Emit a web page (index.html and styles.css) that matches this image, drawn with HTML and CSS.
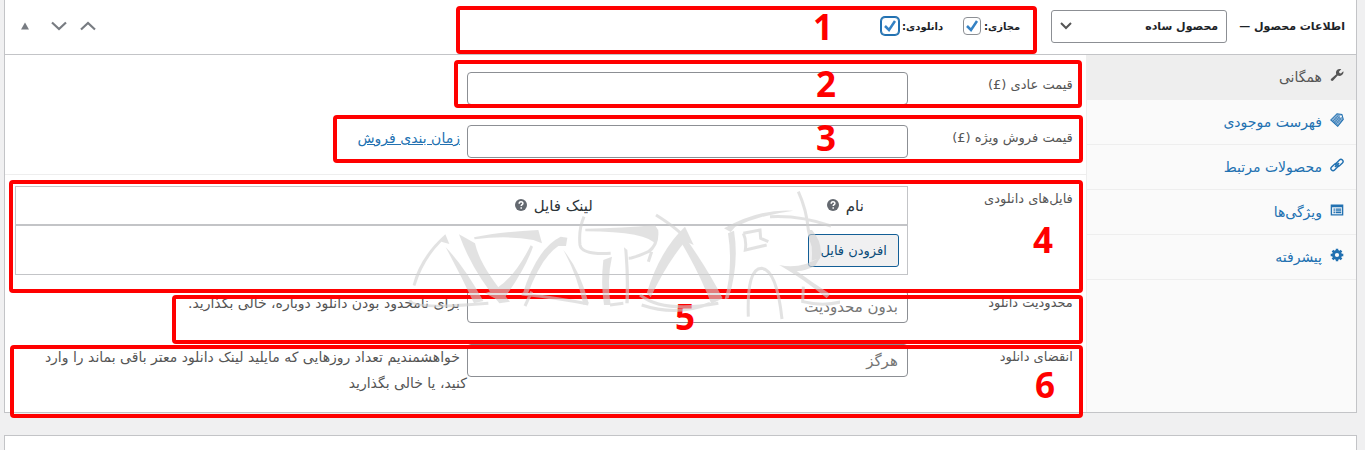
FILE: index.html
```html
<!DOCTYPE html>
<html lang="fa" dir="rtl">
<head>
<meta charset="utf-8">
<title>اطلاعات محصول</title>
<link rel="stylesheet" href="styles.css">
</head>
<body>
<main class="page">
  <section class="postbox">
    <header class="postbox-header">
      <h2 class="title">اطلاعات محصول —</h2>
      <select class="type-select" aria-label="نوع محصول"><option>محصول ساده</option></select>
      <div class="type-options">
        <label class="check">مجازی: <input type="checkbox" checked></label>
        <label class="check check-focus">دانلودی: <input type="checkbox" checked></label>
      </div>
      <div class="handles">
        <button type="button" aria-label="انتقال به بالا"><svg width="16" height="10" viewBox="0 0 16 10"><path d="M1 8.500 8 2l7 6.500" fill="none" stroke="#787c82" stroke-width="2.200"/></svg></button>
        <button type="button" aria-label="انتقال به پایین"><svg width="16" height="10" viewBox="0 0 16 10"><path d="M1 1.500 8 8l7-6.500" fill="none" stroke="#787c82" stroke-width="2.200"/></svg></button>
        <button type="button" class="toggle" aria-label="بستن"><svg width="10" height="10" viewBox="0 0 10 10"><path d="M5 1.500 9 8.500H1z" fill="#787c82"/></svg></button>
      </div>
    </header>
    <div class="panel-wrap">
      <nav class="tabs">
        <a href="#general" class="tab active"><svg viewBox="0 0 20 20"><path d="M17 10c-1.800 1.500-4 1.700-6 .8L4.500 18c-.8.8-2 .8-2.800 0s-.8-2 0-2.800L9 9c-.9-2-.6-4.500 1-6.100 1.700-1.700 4.200-2 6.100-1.100L12.900 5l.5 2.200 2.200.5L19 4.500c.8 2-.2 4-2 5.500z" fill="#555"/></svg>همگانی</a>
        <a href="#inventory" class="tab"><svg viewBox="0 0 20 20"><path d="M1 10 10 1l7 1 2 7-8 10z" fill="#8fb4d6" stroke="#2271b1" stroke-width="1.500"/><path d="M4 10l7 7M6 8l7 7M8 6l7 7M10 4l7 7M4 12 12 3M6 14l9-10M8 16 17 6" stroke="#2271b1" stroke-width=".8"/><circle cx="15.500" cy="5" r="1.500" fill="#fafafa"/></svg>فهرست موجودی</a>
        <a href="#linked" class="tab"><svg viewBox="0 0 20 20"><g fill="none" stroke="#2271b1" stroke-width="2"><rect x="7.500" y="4" width="12" height="6" rx="3" transform="rotate(-45 13.500 7)"/><rect x=".5" y="10" width="12" height="6" rx="3" transform="rotate(-45 6.500 13)"/><path d="M7 13l6-6"/></g></svg>محصولات مرتبط</a>
        <a href="#attributes" class="tab"><svg viewBox="0 0 20 20"><path fill-rule="evenodd" d="M1 2h18v16H1zM3 6v10h14V6z" fill="#2271b1"/><path d="M5 8h2v1.500H5zM5 10.500h2V12H5zM5 13h2v1.500H5zM8 8h8v1.500H8zM8 10.500h8V12H8zM8 13h8v1.500H8z" fill="#2271b1"/></svg>ویژگی‌ها</a>
        <a href="#advanced" class="tab"><svg viewBox="0 0 20 20"><circle cx="10" cy="10" r="5" fill="none" stroke="#2271b1" stroke-width="4"/><path d="M10 1v4M10 15v4M1 10h4M15 10h4M3.600 3.600l3 3M13.400 13.400l3 3M3.600 16.400l3-3M13.400 6.600l3-3" stroke="#2271b1" stroke-width="3.500"/></svg>پیشرفته</a>
      </nav>
      <div class="options">
        <div class="group prices">
          <div class="field"><label for="price">قیمت عادی (£)</label><input id="price" type="text"></div>
          <div class="field"><label for="sale">قیمت فروش ویژه (£)</label><input id="sale" type="text"><p class="hint"><a href="#schedule">زمان بندی فروش</a></p></div>
        </div>
        <div class="group downloads">
          <div class="field files">
            <span class="label">فایل‌های دانلودی</span>
            <table class="files-table">
              <colgroup><col class="c-sort"><col class="c-name"><col></colgroup>
              <thead><tr><th></th>
                <th>نام <svg class="help" viewBox="0 0 12 12"><circle cx="6" cy="6" r="6" fill="#646970"/><path d="M4.200 4.700c0-2.500 3.700-2.400 3.700-.3 0 1.300-1.700 1.300-1.700 2.600M6.200 8.200v1.500" fill="none" stroke="#fff" stroke-width="1.500"/></svg></th>
                <th>لینک فایل <svg class="help" viewBox="0 0 12 12"><circle cx="6" cy="6" r="6" fill="#646970"/><path d="M4.200 4.700c0-2.500 3.700-2.400 3.700-.3 0 1.300-1.700 1.300-1.700 2.600M6.200 8.200v1.500" fill="none" stroke="#fff" stroke-width="1.500"/></svg></th></tr></thead>
              <tbody><tr><td colspan="3"><button type="button" class="add-file">افزودن فایل</button></td></tr></tbody>
            </table>
          </div>
          <div class="field"><label for="limit">محدودیت دانلود</label><input id="limit" type="text" placeholder="بدون محدودیت"><p class="hint">برای نامحدود بودن دانلود دوباره، خالی بگذارید.</p></div>
          <div class="field"><label for="expiry">انقضای دانلود</label><input id="expiry" type="text" placeholder="هرگز"><p class="hint">خواهشمندیم تعداد روزهایی که مایلید لینک دانلود معتر باقی بماند را وارد کنید، یا خالی بگذارید</p></div>
        </div>
      </div>
    </div>
  </section>
  <section class="postbox next-box"></section>

  <div class="mark mark-1"><span>1</span></div>
  <div class="mark mark-2"><span>2</span></div>
  <div class="mark mark-3"><span>3</span></div>
  <div class="mark mark-4"><span>4</span></div>
  <div class="mark mark-5"><span>5</span></div>
  <div class="mark mark-6"><span>6</span></div>

  <svg class="watermark" viewBox="0 0 1320 480" aria-hidden="true">
    <g class="wm-fill">
      <path d="M38 345Q60 260 136 193L148 222 124 215Q70 270 46 348z"/>
      <path d="M137 232Q190 285 250 393L222 400Q180 310 137 232z"/>
      <path d="M177 193 225 220Q240 290 330 395L298 400Q215 300 177 193z"/>
      <path d="M392 226 399 230Q375 300 305 396L255 370Q330 350 392 226z"/>
      <path d="M222 202Q300 185 415 180L426 220 400 210Q320 195 224 208z"/>
      <path d="M367 375Q410 235 482 200L502 203 498 228 475 228Q425 260 382 375z"/>
      <path d="M490 240Q540 300 566 400L550 404Q530 310 490 240z"/>
      <path d="M556 176Q670 175 765 165L774 180 768 225Q745 185 556 184z"/>
      <path d="M610 270 636 260Q620 330 632 405H612Q602 340 610 270z"/>
      <path d="M672 232 682 240Q690 330 686 400H676Q680 310 672 232z"/>
      <path d="M740 370Q780 240 855 170L881 225 856 214Q800 280 752 382z"/>
      <path d="M830 195 865 215Q930 310 968 385L934 402Q895 300 830 195z"/>
      <path d="M972 175Q1080 115 1180 122Q1080 135 1006 170L992 186z"/>
      <path d="M984 190 1002 182Q1018 280 986 385L974 388Q1000 290 984 190z"/>
      <path d="M1138 285Q1200 300 1262 260L1245 288Q1210 305 1190 303 1240 340 1291 372L1280 385Q1215 330 1138 285z"/>
      <path d="M1222 180H1236Q1270 220 1260 265L1235 272Q1240 220 1222 180z"/>
    </g>
    <g class="wm-line">
      <path d="M552 140Q535 180 540 225 545 255 632 250M770 180Q775 225 745 245 700 265 686 265M768 135Q840 180 865 215M630 405 670 400M365 372Q480 385 565 402M375 408 395 365M30 390Q35 420 265 400M755 245 745 275"/>
      <path d="M720 375Q790 430 955 400M725 405Q830 440 930 400M1045 440Q1040 295 1085 295 1130 300 1146 447M1195 65Q1220 120 1225 180 1240 250 1265 250M1030 190Q1040 210 1036 240L1100 225M1030 190 1080 180 1082 205 1105 215M1110 140Q1200 135 1293 168M1210 350 1208 395Q1270 410 1325 395"/>
    </g>
  </svg>
</main>
</body>
</html>
```
FILE: styles.css
```css
* { box-sizing: border-box; }
body {
  margin: 0;
  background: #f0f0f1;
  color: #1d2327;
  font-family: "DejaVu Sans", sans-serif;
  font-size: 13px;
}
.page { position: relative; padding: 0 8px 0 4px; height: 100vh; overflow: hidden; }
.postbox { background: #fff; border: 1px solid #c3c4c7; border-top: 0; }
.next-box { margin-top: 22px; border-top: 1px solid #c3c4c7; height: 80px; }

.postbox-header {
  display: flex;
  align-items: center;
  height: 55px;
  padding: 0 11px 2px 15px;
  border-bottom: 1px solid #c3c4c7;
}
.title { margin: 0 0 0 12px; font-size: 11px; font-weight: 700; white-space: nowrap; }
.type-select {
  appearance: none;
  width: 176px;
  height: 33px;
  padding: 0 8px 0 30px;
  border: 1px solid #8c8f94;
  border-radius: 3px;
  background: #fff url("data:image/svg+xml,%3Csvg xmlns='http://www.w3.org/2000/svg' viewBox='0 0 12 8'%3E%3Cpath d='M1 1l5 5 5-5' fill='none' stroke='%23555' stroke-width='2'/%3E%3C/svg%3E") no-repeat left 8px center / 12px 8px;
  color: #1d2327;
  font: 700 11px "DejaVu Sans", sans-serif;
}
.type-options { display: flex; gap: 20px; margin-right: 31px; }
.check { display: flex; align-items: center; gap: 3px; font-size: 10px; font-weight: 700; }
.check input {
  appearance: none;
  width: 18px;
  height: 18px;
  margin: 0;
  border: 1px solid #8c8f94;
  border-radius: 4px;
  background: #fff url("data:image/svg+xml,%3Csvg xmlns='http://www.w3.org/2000/svg' viewBox='0 0 14 14'%3E%3Cpath d='M2 7l4 4 6-9' fill='none' stroke='%233582c4' stroke-width='2.500'/%3E%3C/svg%3E") no-repeat center / 14px 14px;
}
.check-focus input { border-color: #2271b1; box-shadow: 0 0 0 1px #2271b1; }
.handles { display: flex; align-items: center; gap: 13px; margin-right: auto; }
.handles button { display: flex; padding: 0; border: 0; background: none; }
.handles .toggle { margin-right: 8px; }

.panel-wrap { display: flex; }
.tabs { width: 20%; background: #fafafa; border-left: 1px solid #eee; }
.tab {
  display: flex;
  align-items: center;
  gap: 8px;
  height: 45px;
  padding: 0 12px;
  border-bottom: 1px solid #eee;
  color: #2271b1;
  font-size: 14px;
  text-decoration: none;
}
.tab svg { width: 14px; height: 14px; margin-bottom: 4px; }
.tab.active { background: #eee; color: #555; }

.options { flex: 1; min-width: 0; }
.group { display: grid; padding: 17px 13px 16px 10px; }
.prices { gap: 20px; border-bottom: 1px solid #eee; }
.downloads { gap: 21px; padding-top: 11px; padding-bottom: 16px; }
.field { display: grid; grid-template-columns: 165px 441fr 452fr; align-items: start; height: 33px; }
.field label, .label { color: #555; font-size: 13px; line-height: 26px; }
.field input {
  width: 100%;
  height: 33px;
  padding: 0 9px;
  border: 1px solid #8c8f94;
  border-radius: 4px;
  background: #fff;
  font: 15px "DejaVu Sans", sans-serif;
}
.field input::placeholder { color: #757575; opacity: 1; }
.hint { margin: 0; padding-left: 10px; color: #555; font-size: 14px; line-height: 26px; text-indent: 7px; }
.hint a { color: #2271b1; }
.downloads .field:last-child { height: 52px; }

.downloads .files { grid-template-columns: 165px 1fr; height: 83px; }
.files-table {
  width: 100%;
  table-layout: fixed;
  border: 1px solid #c3c4c7;
  border-spacing: 0;
}
.c-sort { width: 36px; }
.c-name { width: 271px; }
.files-table th {
  height: 39px;
  padding: 0 7px;
  border-bottom: 2px solid #c3c4c7;
  color: #2c3338;
  font-size: 15px;
  font-weight: 400;
  text-align: right;
}
.files-table td { height: 48px; padding: 0 8px; }
.help { width: 12px; height: 12px; margin-right: 2px; }
.add-file {
  display: block;
  height: 33px;
  padding: 0 11px;
  border: 1px solid #135e96;
  border-radius: 3px;
  background: #f0f0f1;
  color: #0a4b78;
  font: 13px "DejaVu Sans", sans-serif;
}

.mark {
  position: absolute;
  border: 4px solid #f00;
  border-radius: 4px;
  color: #f00;
  font: 700 35px/36px "Open Sans", sans-serif;
}
.mark span { position: absolute; }
.mark-1 { left: 456px; right: 328px; top: 6px; height: 48px; }
.mark-1 span { right: 200px; top: -1px; }
.mark-2 { left: 454px; right: 283px; top: 60px; height: 48px; }
.mark-2 span { right: 242px; top: 2px; }
.mark-3 { left: 333px; right: 282px; top: 115px; height: 48px; }
.mark-3 span { right: 243px; top: 1px; }
.mark-4 { left: 9px; right: 282px; top: 180px; height: 113px; }
.mark-4 span { right: 26px; top: 38px; }
.mark-5 { left: 172px; right: 282px; top: 295px; height: 49px; }
.mark-5 span { right: 384px; top: 0; }
.mark-6 { left: 10px; right: 282px; top: 345px; height: 73px; }
.mark-6 span { right: 24px; top: 18px; }

.watermark { position: absolute; left: 400px; top: 170px; width: 440px; height: 160px; pointer-events: none; opacity: .6; }
.wm-fill { fill: #d0d0d0; }
.wm-line { fill: none; stroke: #d0d0d0; stroke-width: 9; }
```
